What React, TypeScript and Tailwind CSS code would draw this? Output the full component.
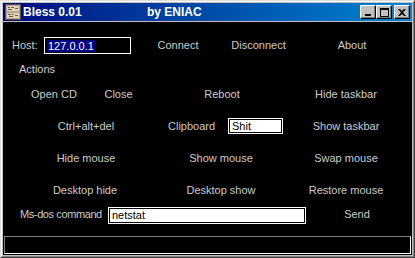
import React from "react";

const font = { fontFamily: '"Liberation Sans", Arial, sans-serif' };

function Cell({ cls, children }: { cls: string; children: React.ReactNode }) {
  return <div className={`shrink-0 whitespace-nowrap ${cls}`}>{children}</div>;
}

function TitleButton({ children }: { children: React.ReactNode }) {
  return (
    <div className="w-[16px] h-[14px] bg-[#c0c0c0] border-t border-l border-t-white border-l-white border-b border-r border-b-black border-r-black shadow-[inset_-1px_-1px_0_#808080] flex items-center justify-center">
      {children}
    </div>
  );
}

export default function App() {
  return (
    <div className="w-[415px] h-[258px] overflow-hidden" style={font}>
      <div className="w-full h-full bg-[#c0c0c0] border border-t-[#dfdfdf] border-l-[#dfdfdf] border-b-[#404040] border-r-[#404040]">
        <div className="w-full h-full border border-t-white border-l-white border-b-[#808080] border-r-[#808080] p-[1px] flex flex-col">
          {/* title bar */}
          <div className="h-[18px] shrink-0 flex items-center bg-gradient-to-r from-[#000080] to-[#1084d0] pr-[2px]">
            <svg width="16" height="16" viewBox="0 0 16 16" className="ml-[2px] shrink-0">
              <rect x="0.5" y="0.5" width="15" height="15" fill="#b8a888" stroke="#5c5040" />
              <rect x="2" y="2" width="12" height="5" fill="#e0d4bc" />
              <rect x="2" y="9" width="12" height="5" fill="#e0d4bc" />
              <path d="M3 3h2v1H3zM6 3h3v1H6zM10 4h3v1h-3zM3 5h4v1H3zM3 10h3v1H3zM7 10h2v1H7zM10 11h3v1h-3zM4 12h4v1H4z" fill="#6a5c48" />
            </svg>
            <div className="ml-[2px] w-[124px] shrink-0 text-white font-bold text-[12px] leading-[14px] whitespace-nowrap">
              Bless 0.01
            </div>
            <div className="text-white font-bold text-[12px] leading-[14px] whitespace-nowrap">by ENIAC</div>
            <div className="ml-auto flex items-center">
              <TitleButton>
                <svg width="8" height="8" viewBox="0 0 8 8">
                  <rect x="1" y="6" width="6" height="2" fill="black" />
                </svg>
              </TitleButton>
              <TitleButton>
                <svg width="9" height="9" viewBox="0 0 9 9">
                  <path d="M0 0h9v2H0zM0 0h1v9H0zM8 0h1v9H8zM0 8h9v1H0z" fill="black" />
                </svg>
              </TitleButton>
              <div className="ml-[2px]">
                <TitleButton>
                  <svg width="8" height="7" viewBox="0 0 8 7">
                    <path d="M0 0h2l2 2 2-2h2L5 3.5 8 7H6L4 5 2 7H0l3-3.5z" fill="black" />
                  </svg>
                </TitleButton>
              </div>
            </div>
          </div>
          <div className="h-[1px] shrink-0" />
          {/* client */}
          <div className="flex-1 bg-black text-[#cccccc] text-[11px] leading-[13px] flex flex-col">
            <div className="h-[15px] shrink-0" />
            {/* row 0 */}
            <div className="h-[17px] shrink-0 flex items-center">
              <Cell cls="ml-[9px] w-[32px]">Host:</Cell>
              <div className="w-[87px] h-[17px] shrink-0 border border-white bg-black flex items-center pl-[2px]">
                <span className="bg-[#000080] text-white px-[1px] leading-[12px]">127.0.0.1</span>
              </div>
              <Cell cls="ml-[7px] w-[80px] text-center">Connect</Cell>
              <Cell cls="w-[81px] text-center">Disconnect</Cell>
              <Cell cls="ml-[13px] w-[80px] text-center">About</Cell>
            </div>
            {/* actions */}
            <div className="h-[24px] shrink-0 pt-[9px] pl-[16px]">Actions</div>
            {/* row 1 */}
            <div className="h-[32px] shrink-0 flex items-center">
              <Cell cls="ml-[21px] w-[60px] text-center">Open CD</Cell>
              <Cell cls="ml-[5px] w-[59px] text-center">Close</Cell>
              <Cell cls="ml-[34px] w-[80px] text-center">Reboot</Cell>
              <Cell cls="ml-[44px] w-[80px] text-center">Hide taskbar</Cell>
            </div>
            {/* row 2 */}
            <div className="h-[32px] shrink-0 flex items-center">
              <Cell cls="ml-[43px] w-[80px] text-center">Ctrl+alt+del</Cell>
              <Cell cls="ml-[42px] w-[60px]">Clipboard</Cell>
              <div className="w-[55px] h-[16px] shrink-0 border border-white bg-white">
                <div className="w-full h-full border border-black bg-white text-black pl-[2px] leading-[12px]">Shit</div>
              </div>
              <Cell cls="ml-[23px] w-[80px] text-center">Show taskbar</Cell>
            </div>
            {/* row 3 */}
            <div className="h-[32px] shrink-0 flex items-center">
              <Cell cls="ml-[43px] w-[80px] text-center">Hide mouse</Cell>
              <Cell cls="ml-[55px] w-[80px] text-center">Show mouse</Cell>
              <Cell cls="ml-[45px] w-[80px] text-center">Swap mouse</Cell>
            </div>
            {/* row 4 */}
            <div className="h-[32px] shrink-0 flex items-center">
              <Cell cls="ml-[42px] w-[80px] text-center">Desktop hide</Cell>
              <Cell cls="ml-[56px] w-[80px] text-center">Desktop show</Cell>
              <Cell cls="ml-[45px] w-[80px] text-center">Restore mouse</Cell>
            </div>
            {/* row 5 */}
            <div className="h-[17px] mt-[1px] shrink-0 flex items-start">
              <Cell cls="ml-[17px] w-[88px] pt-[1px] tracking-[-0.4px]">Ms-dos command</Cell>
              <div className="w-[198px] h-[17px] shrink-0 border border-white bg-white">
                <div className="w-full h-full border border-black bg-white text-black pl-[2px] leading-[13px]">netstat</div>
              </div>
              <Cell cls="ml-[11px] w-[80px] text-center pt-[1px]">Send</Cell>
            </div>
            {/* status bar */}
            <div className="mt-[12px] mx-[1px] h-[18px] shrink-0 border border-t-[#808080] border-l-[#808080] border-b-white border-r-white" />
          </div>
        </div>
      </div>
    </div>
  );
}
